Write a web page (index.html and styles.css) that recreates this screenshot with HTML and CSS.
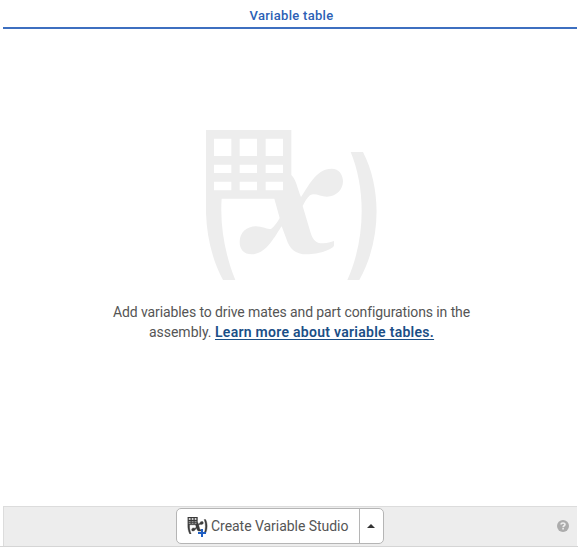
FILE: index.html
```html
<!DOCTYPE html>
<html lang="en">
<head>
<meta charset="utf-8">
<title>Variable table</title>
<link rel="stylesheet" href="styles.css">
</head>
<body>
<svg width="0" height="0" class="defs" aria-hidden="true">
  <symbol id="variables" viewBox="48 45 513 450">
    <path fill-rule="evenodd" d="M48 45H304V180C319 195 322 220 333 246C353 218 377 161 425 161C447 161 459 179 459 199C459 225 437 245 411 245C390 245 374 232 360 241C351 249 344 261 338 273L361 350C369 378 380 385 400 385C412 385 422 381 432 378V391C432 403 385 418 351 418C315 418 298 400 289 371L275 334C255 363 229 418 185 418C161 418 149 403 149 381C149 353 170 334 198 334C218 334 233 345 244 341C254 333 263 321 269 309L253 251H95C89 335 107 425 136 495H99C60 422 45 340 48 251ZM72 71V123H124V71ZM149 71V123H201V71ZM227 71V123H279V71ZM72 149V174H124V149ZM149 149V174H201V149ZM227 149V174H279V149ZM72 200V226H124V200ZM149 200V226H201V200ZM227 200V226H279V200Z"/>
    <path d="M482 111H519C575 220 575 375 508 495H472C526 375 529 225 482 111Z"/>
  </symbol>
</svg>
<div class="panel">
  <header class="tab">Variable table</header>
  <main class="empty">
    <svg class="hero"><use href="#variables"/></svg>
    <p class="message"><span class="line-one">Add variables to drive mates and part configurations in the</span><br><span class="lead">assembly. </span><a href="#">Learn more about variable tables.</a></p>
  </main>
  <footer class="bar">
    <div class="split">
      <button class="create">
        <span class="icon"><svg class="small"><use href="#variables"/></svg><svg class="plus" viewBox="0 0 8 8"><path d="M3 0h2v3h3v2H5v3H3V5H0V3h3z"/></svg></span>
        <span class="label">Create Variable Studio</span>
      </button>
      <button class="more" aria-label="More"><svg width="8" height="4" viewBox="0 0 8 4"><path d="M0 4L4 0l4 4z"/></svg></button>
    </div>
    <svg class="help" viewBox="0 0 12 12"><circle cx="6" cy="6" r="6" fill="#acacac"/><path d="M4.1 4.5C4.1 2.4 8 2.4 8 4.5C8 5.8 6.1 5.7 6.1 7.2M6.1 8.1V9.6" fill="none" stroke="#eee" stroke-width="1.6"/></svg>
  </footer>
</div>
</body>
</html>
```
FILE: styles.css
```css
* { box-sizing: border-box; }
body {
  margin: 0;
  background: #fff;
  color: #555;
  font-family: Roboto, "Liberation Sans", sans-serif;
  overflow: hidden;
}
.defs { display: none; }
.panel {
  height: 547px;
  padding: 0 1px 0 3px;
  display: flex;
  flex-direction: column;
  border-bottom: 1px solid #d5d5d5;
}
.tab {
  height: 29px;
  padding: 7px 0 0 3px;
  border-bottom: 2px solid #3d6fc0;
  color: #2c5fb5;
  font-size: 13px;
  font-weight: 500;
  line-height: 18px;
  letter-spacing: 0.3px;
  text-align: center;
}
.empty {
  flex: 1;
  padding: 101px 0 0 3px;
  display: flex;
  flex-direction: column;
  align-items: center;
}
.hero {
  width: 171px;
  height: 150px;
  fill: #ededed;
}
.message {
  margin: 22px 0 0;
  font-size: 14px;
  line-height: 20px;
  text-align: center;
  white-space: nowrap;
}
.line-one { letter-spacing: -0.1px; }
.message a {
  color: #1b4f87;
  font-weight: 600;
  letter-spacing: 0.28px;
  text-underline-offset: 2px;
}
.bar {
  height: 40px;
  padding: 0 8px 1px 172px;
  display: flex;
  align-items: center;
  justify-content: space-between;
  background: #ededed;
  border: 1px solid #dcdcdc;
  border-right: 0;
  border-bottom: 0;
}
.split {
  width: 208px;
  height: 36px;
  display: flex;
  background: #fff;
  border: 1px solid #b5b5b5;
  border-radius: 5px;
}
button {
  padding: 0;
  border: 0;
  background: none;
  color: #555;
  font: inherit;
}
.create {
  width: 182px;
  padding-left: 10px;
  display: flex;
  align-items: center;
  gap: 3px;
}
.icon {
  position: relative;
  width: 21px;
  height: 18px;
}
.small {
  display: block;
  width: 21px;
  height: 17px;
  fill: #3b3b3b;
  stroke: #3b3b3b;
  stroke-width: 10;
}
.plus {
  position: absolute;
  left: 11px;
  top: 12px;
  width: 8px;
  height: 8px;
  fill: #1f5fc4;
}
.label {
  font-size: 14px;
  letter-spacing: -0.04px;
  white-space: nowrap;
}
.more {
  width: 24px;
  padding-right: 1px;
  display: flex;
  align-items: center;
  justify-content: center;
  border-left: 1px solid #b5b5b5;
}
.more svg { fill: #333; }
.help {
  width: 12px;
  height: 12px;
}
```
